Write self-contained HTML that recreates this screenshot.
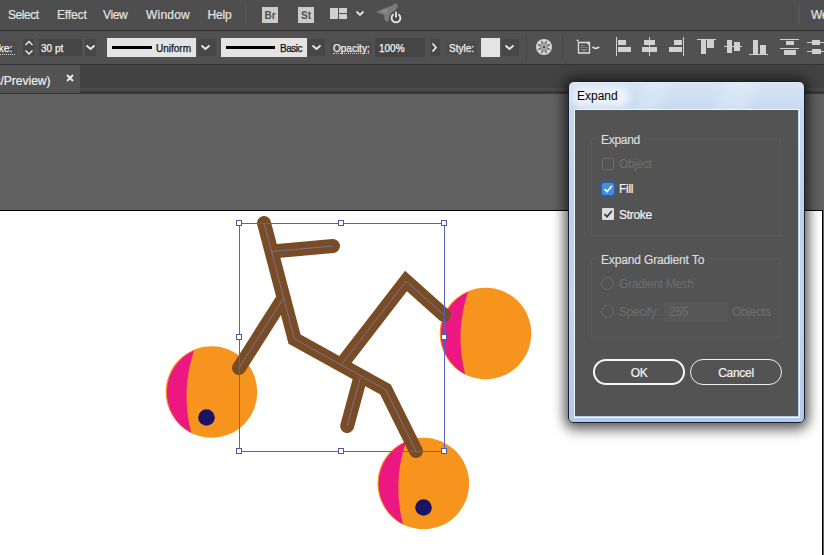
<!DOCTYPE html>
<html><head><meta charset="utf-8">
<style>
*{margin:0;padding:0;box-sizing:border-box}
html,body{width:824px;height:555px;overflow:hidden;background:#5f5f5f;font-family:"Liberation Sans",sans-serif}
.a{position:absolute}
#menu{left:0;top:0;width:824px;height:30px;background:#4e4e4e}
#menu .m{position:absolute;top:8px;font-size:12px;color:#e4e4e4;letter-spacing:-0.45px;-webkit-text-stroke:0.2px currentColor}
#line1{left:0;top:30px;width:824px;height:1px;background:#2e2e2e}
#ctrl{left:0;top:31px;width:824px;height:33px;background:#515151}
#line2{left:0;top:64px;width:824px;height:1px;background:#353535}
#tabs{left:0;top:65px;width:824px;height:28px;background:#424242}
#tab{left:0;top:65px;width:80px;height:28px;background:#535353}
#line3{left:0;top:93px;width:80px;height:1px;background:#3a3a3a}
#canvas{left:0;top:94px;width:824px;height:461px;background:#616161}
#board{left:0;top:210px;width:823px;height:345px;background:#fff;border-top:1px solid #000;border-right:1px solid #000}
.lbl{position:absolute;font-size:11px;color:#e8e8e8}
.fld{position:absolute;background:#404040}
.wbox{position:absolute;background:#e4e4e4}
.chev{position:absolute}
.dt{position:absolute;font-size:12px;letter-spacing:-0.3px;white-space:nowrap;-webkit-text-stroke:0.2px currentColor}
.t10{position:absolute;font-size:10px;line-height:10px;white-space:nowrap;-webkit-text-stroke:0.25px currentColor}
</style></head><body>
<div id="menu" class="a">
  <div class="m" style="left:8px;letter-spacing:-0.45px">Select</div>
  <div class="m" style="left:57px;letter-spacing:-0.13px">Effect</div>
  <div class="m" style="left:103px;letter-spacing:-0.4px">View</div>
  <div class="m" style="left:146px;letter-spacing:0.2px">Window</div>
  <div class="m" style="left:207.5px;letter-spacing:-0.15px">Help</div>
  <div class="a" style="left:245px;top:4px;width:2px;height:20px;background:#545454"></div>
  <div class="a" style="left:262px;top:7px;width:16px;height:16px;background:#cbcbcb;color:#505050;font-size:10px;font-weight:bold;text-align:center;line-height:17px">Br</div>
  <div class="a" style="left:298px;top:7px;width:16px;height:16px;background:#cbcbcb;color:#505050;font-size:10px;font-weight:bold;text-align:center;line-height:17px">St</div>
  <div class="a" style="left:330px;top:8px;width:8px;height:11px;background:#d0d0d0"></div>
  <div class="a" style="left:339px;top:8px;width:8px;height:5px;background:#d0d0d0"></div>
  <div class="a" style="left:339px;top:14px;width:8px;height:5px;background:#d0d0d0"></div>
  <svg class="a" style="left:355px;top:10px" width="10" height="7"><path d="M1.5 1.5 L5 5 L8.5 1.5" stroke="#e0e0e0" stroke-width="1.9" fill="none"/></svg>
  <svg class="a" style="left:372px;top:0px" width="34" height="26">
    <defs><filter id="bl" x="-20%" y="-20%" width="140%" height="140%"><feGaussianBlur stdDeviation="0.7"/></filter></defs>
    <path d="M4 12 L11 9 L19 6 L24 3 L26 6 L23 11 L18 15 L16 22 L13 21 L12 15 Z" fill="#7a7a7a" filter="url(#bl)"/>
    <path d="M9 11 L16 9 L14 14 Z" fill="#8c8c8c" filter="url(#bl)"/>
    <circle cx="24" cy="17.6" r="6.6" fill="#484848" opacity="0.9"/>
    <path d="M21.6 14.2 A4.4 4.4 0 1 0 26.4 14.2" fill="none" stroke="#e2e2e2" stroke-width="1.9"/>
    <path d="M24 11.8 V17.6" stroke="#e2e2e2" stroke-width="1.9"/>
  </svg>
  <div class="a" style="left:792px;top:4px;width:1px;height:20px;background:#474747"></div><div class="a" style="left:799px;top:4px;width:1px;height:20px;background:#585858"></div>
  <div class="m" style="left:811px">We</div>
</div>
<div id="line1" class="a"></div>
<div id="ctrl" class="a">
  <div class="a" style="left:0;top:10px;width:17px;height:15px;background:#4d4d4d"></div>
  <div class="t10" style="left:-1.5px;top:11.5px;color:#f4f4f4;font-size:10.5px">ke:</div>
  <div class="a" style="left:0;top:23px;width:15px;height:0;border-top:1px dotted #d8d8d8"></div>
  <div class="fld" style="left:23px;top:8px;width:11px;height:17px;background:#474747"></div>
  <svg class="a" style="left:24px;top:9px" width="10" height="16"><path d="M1.5 5 L5 1.5 L8.5 5 M1.5 10.5 L5 14 L8.5 10.5" stroke="#e6e6e6" stroke-width="1.5" fill="none"/></svg>
  <div class="fld" style="left:39px;top:8px;width:43px;height:17px;background:#454545"></div>
  <div class="t10" style="left:41px;top:13px;color:#f2f2f2">30 pt</div>
  <div class="fld" style="left:85px;top:8px;width:11px;height:17px;background:#474747"></div>
  <svg class="a" style="left:85px;top:13px" width="11" height="7"><path d="M1.5 1.5 L5.5 5 L9.5 1.5" stroke="#ececec" stroke-width="1.7" fill="none"/></svg>
  <div class="wbox" style="left:107px;top:7px;width:89px;height:19px"></div>
  <div class="a" style="left:112px;top:15px;width:40px;height:3px;background:#000"></div>
  <div class="t10" style="left:156px;top:13px;color:#141414;-webkit-text-stroke:0.25px #141414">Uniform</div>
  <div class="fld" style="left:198px;top:8px;width:18px;height:17px;background:#474747"></div>
  <svg class="a" style="left:200px;top:13px" width="11" height="7"><path d="M1.5 1.5 L5.5 5 L9.5 1.5" stroke="#ececec" stroke-width="1.7" fill="none"/></svg>
  <div class="wbox" style="left:221px;top:7px;width:86px;height:19px"></div>
  <div class="a" style="left:226px;top:15px;width:49px;height:3px;background:#000"></div>
  <div class="t10" style="left:280px;top:13px;color:#141414;-webkit-text-stroke:0.25px #141414;letter-spacing:-0.5px">Basic</div>
  <div class="fld" style="left:308px;top:8px;width:17px;height:17px;background:#474747"></div>
  <svg class="a" style="left:311px;top:13px" width="11" height="7"><path d="M1.5 1.5 L5.5 5 L9.5 1.5" stroke="#ececec" stroke-width="1.7" fill="none"/></svg>
  <div class="a" style="left:330px;top:10px;width:42px;height:14px;background:#4c4c4c"></div>
  <div class="t10" style="left:333px;top:13px;color:#f0f0f0">Opacity:</div>
  <div class="a" style="left:333px;top:22px;width:36px;height:0;border-top:1px dotted #cfcfcf"></div>
  <div class="fld" style="left:375px;top:7px;width:50px;height:19px;background:#454545"></div>
  <div class="t10" style="left:379px;top:13px;color:#f2f2f2">100%</div>
  <div class="fld" style="left:430px;top:8px;width:10px;height:17px;background:#474747"></div>
  <svg class="a" style="left:431px;top:11px" width="7" height="11"><path d="M1.5 1.5 L5 5.5 L1.5 9.5" stroke="#ececec" stroke-width="1.7" fill="none"/></svg>
  <div class="a" style="left:446px;top:10px;width:31px;height:14px;background:#4c4c4c"></div>
  <div class="t10" style="left:449px;top:13px;color:#f0f0f0">Style:</div>
  <div class="wbox" style="left:481px;top:7px;width:19px;height:19px"></div>
  <div class="fld" style="left:502px;top:8px;width:17px;height:17px;background:#474747"></div>
  <svg class="a" style="left:504px;top:13px" width="11" height="7"><path d="M1.5 1.5 L5.5 5 L9.5 1.5" stroke="#ececec" stroke-width="1.7" fill="none"/></svg>
  <div class="a" style="left:526px;top:3px;width:1px;height:27px;background:#474747"></div>
  <svg class="a" style="left:535px;top:7px" width="18" height="18">
    <circle cx="9" cy="9" r="8" fill="#d6d6d6"/>
    <g fill="#7c7c7c"><ellipse cx="13.07" cy="10.68" rx="2.4" ry="1.1" transform="rotate(22.5 13.07 10.68)"/><ellipse cx="10.68" cy="13.07" rx="2.4" ry="1.1" transform="rotate(67.5 10.68 13.07)"/><ellipse cx="7.32" cy="13.07" rx="2.4" ry="1.1" transform="rotate(112.5 7.32 13.07)"/><ellipse cx="4.93" cy="10.68" rx="2.4" ry="1.1" transform="rotate(157.5 4.93 10.68)"/><ellipse cx="4.93" cy="7.32" rx="2.4" ry="1.1" transform="rotate(202.5 4.93 7.32)"/><ellipse cx="7.32" cy="4.93" rx="2.4" ry="1.1" transform="rotate(247.5 7.32 4.93)"/><ellipse cx="10.68" cy="4.93" rx="2.4" ry="1.1" transform="rotate(292.5 10.68 4.93)"/><ellipse cx="13.07" cy="7.32" rx="2.4" ry="1.1" transform="rotate(337.5 13.07 7.32)"/></g>
    <circle cx="9" cy="9" r="1.5" fill="#4a4a4a"/>
  </svg>
  <div class="a" style="left:562px;top:3px;width:1px;height:27px;background:#474747"></div>
  <svg class="a" style="left:574px;top:7px" width="28" height="18">
    <path d="M4.5 4.5 H15.5 V15 H4.5 Z" fill="none" stroke="#dedede" stroke-width="1.3"/>
    <path d="M11.5 4 L16 4 L16 8.5 Z" fill="#dadada"/>
    <path d="M6.5 7.5 H11 M6.5 9.5 H13.5 M6.5 11.5 H13.5 M8 13 H12" stroke="#bdbdbd" stroke-width="0.8" opacity="0.55"/>
    <circle cx="3.6" cy="2.6" r="1" fill="#e6e6e6"/>
    <path d="M18.5 8.8 Q21.8 11.8 25.2 8.8" stroke="#e0e0e0" stroke-width="1.7" fill="none"/>
  </svg>
  <!-- align icons -->
  <div class="a" style="left:616px;top:6px;width:1px;height:19px;background:#d0d0d0"></div>
  <div class="a" style="left:618px;top:9px;width:8px;height:5px;background:#d0d0d0"></div>
  <div class="a" style="left:618px;top:16px;width:13px;height:5px;background:#d0d0d0"></div>
  <div class="a" style="left:649px;top:6px;width:1px;height:19px;background:#d0d0d0"></div>
  <div class="a" style="left:644px;top:9px;width:11px;height:5px;background:#d0d0d0"></div>
  <div class="a" style="left:642px;top:16px;width:15px;height:5px;background:#d0d0d0"></div>
  <div class="a" style="left:683px;top:6px;width:1px;height:19px;background:#d0d0d0"></div>
  <div class="a" style="left:674px;top:9px;width:8px;height:5px;background:#d0d0d0"></div>
  <div class="a" style="left:669px;top:16px;width:13px;height:5px;background:#d0d0d0"></div>
  <div class="a" style="left:697px;top:8px;width:19px;height:1px;background:#d0d0d0"></div>
  <div class="a" style="left:701px;top:9px;width:5px;height:14px;background:#d0d0d0"></div>
  <div class="a" style="left:707px;top:9px;width:7px;height:8px;background:#d0d0d0"></div>
  <div class="a" style="left:724px;top:15px;width:18px;height:1px;background:#d0d0d0"></div>
  <div class="a" style="left:727px;top:9px;width:5px;height:13px;background:#d0d0d0"></div>
  <div class="a" style="left:734px;top:11px;width:6px;height:9px;background:#d0d0d0"></div>
  <div class="a" style="left:749px;top:23px;width:19px;height:1px;background:#d0d0d0"></div>
  <div class="a" style="left:753px;top:9px;width:5px;height:14px;background:#d0d0d0"></div>
  <div class="a" style="left:760px;top:14px;width:6px;height:9px;background:#d0d0d0"></div>
  <div class="a" style="left:780px;top:8px;width:19px;height:1px;background:#d0d0d0"></div>
  <div class="a" style="left:780px;top:17px;width:19px;height:1px;background:#d0d0d0"></div>
  <div class="a" style="left:786px;top:10px;width:8px;height:4px;background:#d0d0d0"></div>
  <div class="a" style="left:784px;top:19px;width:12px;height:5px;background:#d0d0d0"></div>
  <div class="a" style="left:807px;top:11px;width:17px;height:1px;background:#d0d0d0"></div>
  <div class="a" style="left:807px;top:20px;width:17px;height:1px;background:#d0d0d0"></div>
  <div class="a" style="left:812px;top:9px;width:8px;height:5px;background:#d0d0d0"></div>
  <div class="a" style="left:812px;top:18px;width:9px;height:5px;background:#d0d0d0"></div>
</div>
<div id="line2" class="a"></div>
<div id="tabs" class="a"></div><div class="a" style="left:0;top:88px;width:824px;height:3px;background:#4a4a4a"></div><div class="a" style="left:0;top:91px;width:824px;height:3px;background:#393939"></div>
<div id="tab" class="a">
  <div class="a" style="left:-5.5px;top:9px;font-size:12px;color:#f0f0f0;-webkit-text-stroke:0.2px #f0f0f0">s/Preview)</div>
  <svg class="a" style="left:66px;top:9px" width="8" height="8"><path d="M1 1 L7 7 M7 1 L1 7" stroke="#eee" stroke-width="1.8"/></svg>
</div>
<div id="line3" class="a"></div>
<div id="canvas" class="a"></div>
<div id="board" class="a"></div>

<svg class="a" style="left:0;top:0" width="824" height="555">
  <defs>
    <clipPath id="cb"><rect x="0" y="211" width="822" height="344"/></clipPath>
  </defs>
  <g clip-path="url(#cb)">
  <!-- circles -->
  <g id="c1">
    <circle cx="211.5" cy="392" r="45.8" fill="#f7941d"/>
    <path d="M194 350.4 A45.8 45.8 0 0 0 191.2 432.7 Q180.5 391 194 350.4 Z" fill="#ec1780"/>
    <circle cx="206.5" cy="417.5" r="8.3" fill="#1b1464"/>
  </g>
  <g>
    <circle cx="485.5" cy="333.5" r="45.8" fill="#f7941d"/>
    <path d="M468 291.9 A45.8 45.8 0 0 0 465.2 374.2 Q454.5 332.5 468 291.9 Z" fill="#ec1780"/>
  </g>
  <g>
    <circle cx="423.3" cy="483.5" r="45.8" fill="#f7941d"/>
    <path d="M405.8 441.9 A45.8 45.8 0 0 0 403 524.2 Q392.3 482.5 405.8 441.9 Z" fill="#ec1780"/>
    <circle cx="423.5" cy="507.5" r="8.3" fill="#1b1464"/>
  </g>
  <!-- strokes -->
  <g fill="none" stroke="#784d25" stroke-width="14" stroke-linecap="round" stroke-linejoin="miter" stroke-miterlimit="10">
    <path id="p1" d="M264 223 L294.5 339 L385.5 389.5 L416 451"/>
    <path id="p2" d="M272 251.5 L333 246"/>
    <path id="p3" d="M283.5 298 L239 368"/>
    <path id="p4" d="M341.5 364.5 L406 281 L444 315"/>
    <path id="p5" d="M360.3 377.6 L347.2 426"/>
  </g>
  <g fill="none" stroke="#8078c0" stroke-width="1" opacity="0.75">
    <path d="M264 223 L294.5 339 L385.5 389.5 L416 451"/>
    <path d="M272 251.5 L333 246"/>
    <path d="M283.5 298 L239 368"/>
    <path d="M341.5 364.5 L406 281 L444 315"/>
    <path d="M360.3 377.6 L347.2 426"/>
  </g>
  <!-- selection box -->
  <rect x="239.5" y="223.5" width="205" height="228" fill="none" stroke="#5563bd" stroke-width="1"/>
  <g fill="#fff" stroke="#4c58a8" stroke-width="1">
    <rect x="236.5" y="220.5" width="5" height="5"/>
    <rect x="338.5" y="220.5" width="5" height="5"/>
    <rect x="441.5" y="220.5" width="5" height="5"/>
    <rect x="236.5" y="334.5" width="5" height="5"/>
    <rect x="441.5" y="334.5" width="5" height="5"/>
    <rect x="236.5" y="448.5" width="5" height="5"/>
    <rect x="338.5" y="448.5" width="5" height="5"/>
    <rect x="441.5" y="448.5" width="5" height="5"/>
  </g>
  </g>
</svg>

<div class="a" id="dlg" style="left:568px;top:81px;width:237px;height:342px;border:1px solid #18202c;border-radius:6px 6px 5px 5px;background:linear-gradient(180deg,#cfe1f3 0%,#c4d9ef 8%,#bbd1eb 40%,#c0d5ed 65%,#b4c9e8 100%);box-shadow:0 0 12px 4px rgba(0,0,0,0.5), 0 8px 14px rgba(0,0,0,0.3);overflow:hidden">
  <div class="a" style="left:0;top:0;width:235px;height:27px;background:linear-gradient(180deg,rgba(255,255,255,0.35) 0%,rgba(255,255,255,0.12) 6%,rgba(255,255,255,0.05) 100%)"></div>
  <div class="a" style="left:70px;top:-10px;width:22px;height:60px;background:rgba(255,255,255,0.18);transform:rotate(25deg);filter:blur(4px)"></div>
  <div class="a" style="left:150px;top:-10px;width:30px;height:60px;background:rgba(255,255,255,0.2);transform:rotate(25deg);filter:blur(5px)"></div>
  <div class="a" style="left:4px;top:5px;width:56px;height:20px;background:rgba(255,255,255,0.6);border-radius:8px;filter:blur(3px)"></div>
  <div class="a" style="left:8px;top:7px;font-size:12px;color:#000">Expand</div>
  <div class="a" style="left:5px;top:27px;width:226px;height:309px;border:1px solid #f4f8fc"></div>
</div>
<div class="a" style="left:575px;top:110px;width:223px;height:306px;background:#535353">
  <!-- group 1 -->
  <div class="a" style="left:16px;top:28px;width:190px;height:98px;border:1px solid #5a5a5a"></div>
  <div class="dt" style="left:22px;top:23.4px;padding:0 4px;background:#535353;color:#dcdcdc">Expand</div>
  <div class="a" style="left:27px;top:48px;width:12px;height:12px;border:1px solid #6c6c6c;border-radius:2px"></div>
  <div class="dt" style="left:44px;top:47px;color:#6e6e6e;-webkit-text-stroke:0">Object</div>
  <div class="a" style="left:27px;top:73px;width:12px;height:12px;background:#3d8fe8;border-radius:2px;box-shadow:0 0 3px 2px rgba(40,95,190,0.6)"></div>
  <svg class="a" style="left:27px;top:73px" width="12" height="12"><path d="M2.5 6 L5 8.8 L9.8 3" stroke="#fff" stroke-width="1.7" fill="none"/></svg>
  <div class="dt" style="left:44px;top:72.3px;color:#f4f4f4">Fill</div>
  <div class="a" style="left:27px;top:98px;width:12px;height:12px;background:#dcdcdc;border-radius:1px"></div>
  <svg class="a" style="left:27px;top:98px" width="12" height="12"><path d="M2.5 6 L5 8.8 L9.8 3" stroke="#333" stroke-width="1.7" fill="none"/></svg>
  <div class="dt" style="left:44px;top:97.6px;color:#f4f4f4">Stroke</div>
  <!-- group 2 -->
  <div class="a" style="left:16px;top:148px;width:189px;height:80px;border:1px solid #5a5a5a"></div>
  <div class="dt" style="left:22px;top:142.7px;padding:0 4px;background:#535353;color:#dcdcdc;letter-spacing:-0.15px">Expand Gradient To</div>
  <div class="a" style="left:26px;top:167px;width:13px;height:13px;border:1px solid #6c6c6c;border-radius:50%"></div>
  <div class="dt" style="left:44px;top:166.7px;color:#6e6e6e;-webkit-text-stroke:0">Gradient Mesh</div>
  <div class="a" style="left:26px;top:195px;width:13px;height:13px;border:1px solid #6c6c6c;border-radius:50%"></div>
  <div class="dt" style="left:44px;top:194.5px;color:#6e6e6e;-webkit-text-stroke:0">Specify:</div>
  <div class="a" style="left:89px;top:192px;width:64px;height:20px;background:#585858"></div>
  <div class="dt" style="left:94px;top:194.5px;color:#6e6e6e;-webkit-text-stroke:0">255</div>
  <div class="dt" style="left:157px;top:194.5px;color:#6e6e6e;-webkit-text-stroke:0">Objects</div>
  <!-- buttons -->
  <div class="a" style="left:18px;top:249px;width:92px;height:26px;border:2px solid #f6f6f6;border-radius:13px"></div>
  <div class="dt" style="left:18px;top:255.6px;width:92px;text-align:center;color:#f4f4f4">OK</div>
  <div class="a" style="left:115px;top:249px;width:92px;height:26px;border:1.5px solid #f0f0f0;border-radius:13px"></div>
  <div class="dt" style="left:115px;top:255.6px;width:92px;text-align:center;color:#f4f4f4">Cancel</div>
</div>
</body></html>
